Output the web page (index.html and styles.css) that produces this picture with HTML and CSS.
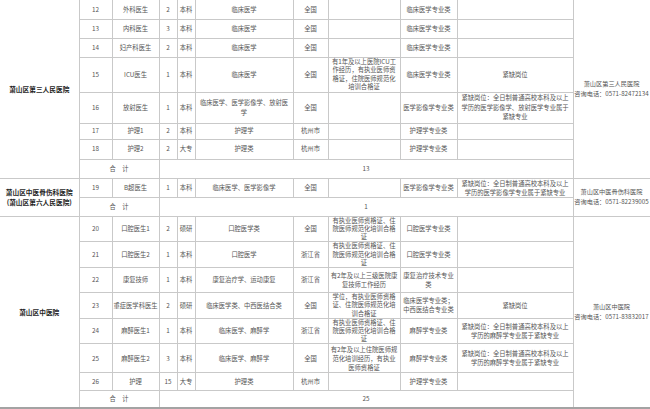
FILE: index.html
```html
<!DOCTYPE html>
<html lang="zh">
<head>
<meta charset="utf-8">
<title>招聘岗位表</title>
<link rel="stylesheet" href="styles.css">
</head>
<body>
<table class="grid">
<colgroup>
<col class="c1"><col class="c2"><col class="c3"><col class="c4"><col class="c5"><col class="c6"><col class="c7"><col class="c8"><col class="c9"><col class="c10"><col class="c11">
</colgroup>
<tbody>
<tr class="first h19">
  <td class="hosp" rowspan="8">萧山区第三人民医院</td>
  <td>12</td><td>外科医生</td><td>2</td><td>本科</td><td>临床医学</td><td>全国</td><td></td><td>临床医学专业类</td><td></td>
  <td class="contact" rowspan="8">萧山区第三人民医院<br>咨询电话：0571-82472134</td>
</tr>
<tr class="h19"><td>13</td><td>内科医生</td><td>3</td><td>本科</td><td>临床医学</td><td>全国</td><td></td><td>临床医学专业类</td><td></td></tr>
<tr class="h19"><td>14</td><td>妇产科医生</td><td>2</td><td>本科</td><td>临床医学</td><td>全国</td><td></td><td>临床医学专业类</td><td></td></tr>
<tr class="h35"><td>15</td><td>ICU医生</td><td>1</td><td>本科</td><td>临床医学</td><td>全国</td><td class="t85">有1年及以上医院ICU工<br>作经历，有执业医师资<br>格证，住院医师规范化<br>培训合格证</td><td>临床医学专业类</td><td>紧缺岗位</td></tr>
<tr class="h31"><td>16</td><td>放射医生</td><td>1</td><td>本科</td><td>临床医学、医学影像学、放射医<br>学</td><td>全国</td><td></td><td>医学影像学专业类</td><td>紧缺岗位：全日制普通高校本科及以上<br>学历的医学影像学、放射医学专业属于<br>紧缺专业</td></tr>
<tr class="h16"><td>17</td><td>护理1</td><td>2</td><td>本科</td><td>护理学</td><td>杭州市</td><td></td><td>护理学专业类</td><td></td></tr>
<tr class="h20"><td>18</td><td>护理2</td><td>2</td><td>大专</td><td>护理类</td><td>杭州市</td><td></td><td>护理学专业类</td><td></td></tr>
<tr class="h19"><td colspan="2">合　计</td><td colspan="7">13</td></tr>

<tr class="h19">
  <td class="hosp" rowspan="2">萧山区中医骨伤科医院<br>(萧山区第六人民医院)</td>
  <td>19</td><td>B超医生</td><td>1</td><td>本科</td><td>临床医学、医学影像学</td><td>全国</td><td></td><td>医学影像学专业类</td><td class="t9">紧缺岗位：全日制普通高校本科及以上<br>学历的医学影像学专业属于紧缺专业</td>
  <td class="contact" rowspan="2">萧山区中医骨伤科医院<br>咨询电话：0571-82239005</td>
</tr>
<tr class="h19"><td colspan="2">合　计</td><td colspan="7">1</td></tr>

<tr class="h25">
  <td class="hosp bot" rowspan="8">萧山区中医院</td>
  <td>20</td><td>口腔医生1</td><td>2</td><td>硕研</td><td>口腔医学类</td><td>全国</td><td class="t83">有执业医师资格证、住<br>院医师规范化培训合格<br>证</td><td>口腔医学专业类</td><td></td>
  <td class="contact bot" rowspan="8">萧山区中医院<br>咨询电话：0571-83832017</td>
</tr>
<tr class="h26"><td>21</td><td>口腔医生2</td><td>1</td><td>本科</td><td>口腔医学</td><td>浙江省</td><td class="t83">有执业医师资格证、住<br>院医师规范化培训合格<br>证</td><td>口腔医学专业类</td><td></td></tr>
<tr class="h25"><td>22</td><td>康复技师</td><td>1</td><td>本科</td><td>康复治疗学、运动康复</td><td>浙江省</td><td>有2年及以上三级医院康<br>复技师工作经历</td><td>康复治疗技术专业<br>类</td><td></td></tr>
<tr class="h25"><td>23</td><td>重症医学科医生</td><td>2</td><td>硕研</td><td>临床医学类、中西医结合类</td><td>全国</td><td class="t83">学位，有执业医师资格<br>证、住院医师规范化培<br>训合格证</td><td>临床医学专业类；<br>中西医结合专业类</td><td>紧缺岗位</td></tr>
<tr class="h25"><td>24</td><td>麻醉医生1</td><td>1</td><td>本科</td><td>临床医学、麻醉学</td><td>浙江省</td><td class="t83">有执业医师资格证、住<br>院医师规范化培训合格<br>证</td><td>麻醉学专业类</td><td>紧缺岗位：全日制普通高校本科及以上<br>学历的麻醉学专业属于紧缺专业</td></tr>
<tr class="h29"><td>25</td><td>麻醉医生2</td><td>3</td><td>本科</td><td>临床医学、麻醉学</td><td>全国</td><td class="t9">有2年及以上住院医师规<br>范化培训经历，有执业<br>医师资格证</td><td>麻醉学专业类</td><td>紧缺岗位：全日制普通高校本科及以上<br>学历的麻醉学专业属于紧缺专业</td></tr>
<tr class="h18"><td>26</td><td>护理</td><td>15</td><td>大专</td><td>护理类</td><td>杭州市</td><td></td><td>护理学专业类</td><td></td></tr>
<tr class="h17 last"><td colspan="2">合　计</td><td colspan="7">25</td></tr>
</tbody>
</table>
</body>
</html>
```

FILE: styles.css
```css
html, body {
  margin: 0;
  padding: 0;
  background: #ffffff;
}

body {
  font-family: "Noto Sans CJK SC", "Noto Sans", sans-serif;
  overflow: hidden;
}

.grid {
  border-collapse: collapse;
  table-layout: fixed;
  width: 650px;
  font-size: 6.3px;
  line-height: 9.5px;
  color: #555555;
}

.c1 { width: 79px; }
.c2 { width: 33px; }
.c3 { width: 47px; }
.c4 { width: 18px; }
.c5 { width: 18px; }
.c6 { width: 98px; }
.c7 { width: 35px; }
.c8 { width: 72px; }
.c9 { width: 57px; }
.c10 { width: 116px; }
.c11 { width: 77px; }

.grid td {
  border: 1px solid #c9c9c9;
  padding: 0;
  text-align: center;
  vertical-align: middle;
  white-space: nowrap;
  overflow: visible;
}

.grid tr.first td {
  border-top: 0;
}

.grid td.hosp {
  border-left: 0;
  color: #1e1e1e;
  font-weight: bold;
  font-size: 6.7px;
  line-height: 10px;
}

.grid td.contact {
  font-size: 6.2px;
  line-height: 10px;
}

.grid tr.last td,
.grid td.bot {
  border-bottom: 2px solid #a3a3a3;
}

.grid td.t85 { line-height: 8.5px; }
.grid td.t83 { line-height: 8.2px; }
.grid td.t9 { line-height: 9px; }

.h16 { height: 16px; }
.h17 { height: 17px; }
.h18 { height: 18px; }
.h19 { height: 19px; }
.h20 { height: 20px; }
.h25 { height: 25px; }
.h26 { height: 26px; }
.h29 { height: 29px; }
.h31 { height: 31px; }
.h35 { height: 35px; }
```
